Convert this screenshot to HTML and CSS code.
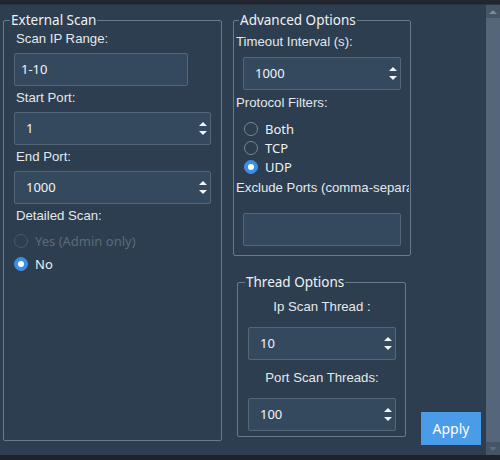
FILE: index.html
```html
<!DOCTYPE html>
<html>
<head>
<meta charset="utf-8">
<link rel="stylesheet" href="styles.css">
</head>
<body>
<div class="window">
  <div class="topbar"></div>
  <div class="main">
    <div class="content">
      <fieldset class="group ext">
        <legend>External Scan</legend>
        <div class="label">Scan IP Range:</div>
        <div class="field lineedit w-ip">1-10</div>
        <div class="label">Start Port:</div>
        <div class="field spin w-port"><span class="val">1</span><span class="arrows"><i class="up"></i><i class="down"></i></span></div>
        <div class="label">End Port:</div>
        <div class="field spin w-port"><span class="val">1000</span><span class="arrows"><i class="up"></i><i class="down"></i></span></div>
        <div class="label">Detailed Scan:</div>
        <div class="radios radios-left">
          <div class="radio disabled"><span class="dot"></span><span class="rtext">Yes (Admin only)</span></div>
          <div class="radio checked"><span class="dot"></span><span class="rtext">No</span></div>
        </div>
      </fieldset>
      <div class="right">
        <fieldset class="group adv">
          <legend>Advanced Options</legend>
          <div class="label">Timeout Interval (s):</div>
          <div class="field spin w-adv"><span class="val">1000</span><span class="arrows"><i class="up"></i><i class="down"></i></span></div>
          <div class="label lbl-proto">Protocol Filters:</div>
          <div class="radios radios-right">
            <div class="radio"><span class="dot"></span><span class="rtext">Both</span></div>
            <div class="radio"><span class="dot"></span><span class="rtext">TCP</span></div>
            <div class="radio checked"><span class="dot"></span><span class="rtext">UDP</span></div>
          </div>
          <div class="label lbl-exclude">Exclude Ports (comma-separated):</div>
          <div class="field lineedit w-adv"></div>
        </fieldset>
        <div class="bottomrow">
          <fieldset class="group thread">
            <legend>Thread Options</legend>
            <div class="label center">Ip Scan Thread :</div>
            <div class="field spin w-thread"><span class="val">10</span><span class="arrows"><i class="up"></i><i class="down"></i></span></div>
            <div class="label center lbl-port">Port Scan Threads:</div>
            <div class="field spin w-thread"><span class="val">100</span><span class="arrows"><i class="up"></i><i class="down"></i></span></div>
          </fieldset>
          <button class="apply">Apply</button>
        </div>
      </div>
    </div>
    <div class="scrollbar">
      <div class="sb-btn"><i class="sb-up"></i></div>
      <div class="sb-handle"></div>
      <div class="sb-btn"><i class="sb-down"></i></div>
    </div>
  </div>
  <div class="bottombar"></div>
</div>
</body>
</html>
```
FILE: styles.css
```css
* { box-sizing: border-box; }
html, body { margin: 0; padding: 0; }
body {
  width: 500px;
  height: 460px;
  overflow: hidden;
  background: #2c3e50;
  font-family: "Liberation Sans", Arial, sans-serif;
  font-size: 13.2px;
  color: #e4e8ec;
}
.window { width: 500px; height: 460px; display: flex; flex-direction: column; }
.topbar { height: 5px; background: #22272f; border-bottom: 1px solid #2a3542; }
.bottombar { height: 5px; background: #1f2328; }
.main { flex: 1; display: flex; min-height: 0; }
.content { flex: 1; display: flex; align-items: flex-start; padding-top: 6px; }

.group {
  margin: 0;
  border: 1px solid #6a7a8a;
  border-radius: 2px;
  min-width: 0;
}
.group legend {
  font-family: "Noto Sans", "Open Sans", sans-serif;
  font-size: 13.5px;
  line-height: 18px;
  color: #f0f2f4;
  padding: 0 1px;
}

.label {
  line-height: 18px;
  height: 16px;
  white-space: nowrap;
}

.field {
  height: 33px;
  border: 1px solid #53667a;
  border-radius: 2px;
  background: #34495e;
  font-family: "Noto Sans", "Open Sans", sans-serif;
  font-size: 13px;
  line-height: 31px;
  color: #f2f4f6;
}
.lineedit { padding-left: 6px; }
.spin { display: flex; align-items: center; justify-content: space-between; padding-left: 11px; padding-right: 3px; }
.arrows { display: flex; flex-direction: column; gap: 5px; }
.arrows i { display: block; width: 0; height: 0; border-left: 4px solid transparent; border-right: 4px solid transparent; }
.arrows .up { border-bottom: 4px solid #f2f4f6; }
.arrows .down { border-top: 4px solid #f2f4f6; }

/* External scan */
.ext { margin-left: 3px; width: 219px; height: 430px; padding: 1px 10px 0 10px; }
.ext legend { margin-left: -4px; }
.ext .label { margin: 0 0 7px 2px; }
.ext .field { margin-bottom: 3px; }
.w-ip { width: 174px; }
.w-port { width: 197px; }

.radios { display: flex; flex-direction: column; }
.radios-left { margin-top: 8px; gap: 4px; }
.radio { display: flex; align-items: center; height: 19px; gap: 7px; font-family: "Noto Sans", "Open Sans", sans-serif; font-size: 13px; color: #eef1f4; }
.dot { width: 14px; height: 14px; border-radius: 50%; border: 1px solid #7a8693; flex: none; position: relative; }
.radio.checked .dot { background: #3d8ee6; border-color: #3d8ee6; }
.radio.checked .dot::after { content: ""; position: absolute; left: 3px; top: 3px; width: 6px; height: 6px; border-radius: 50%; background: #ffffff; }
.radio.disabled .dot { border-color: #4c5a69; }
.radio.disabled .rtext { color: #5c6b7a; }

/* Right column */
.right { display: flex; flex-direction: column; margin-left: 11px; }
.adv { width: 178px; padding: 4px 1px 9px 1px; }
.adv legend { margin-left: 4px; }
.adv .label { margin-left: 1px; }
.adv .field { margin-left: 8px; }
.w-adv { width: 158px; }
.adv .spin { margin-top: 8px; }
.lbl-proto { margin-top: 4px; }
.radios-right { margin-top: 9px; margin-left: 9px; }
.lbl-exclude { margin-top: 3px; width: 173px; height: 19px; margin-bottom: -3px; overflow: hidden; }
.adv .lineedit { margin-top: 18px; }

.bottomrow { display: flex; align-items: flex-end; margin-top: 17px; }
.thread { margin-left: 4px; width: 169px; padding: 7px 9px 5px 10px; margin-bottom: 8px; }
.thread legend { margin-left: -3px; }
.label.center { text-align: center; }
.thread .spin { margin-top: 13px; }
.lbl-port { margin-top: 9px; }
.w-thread { width: 148px; }

.apply {
  margin-left: 15px;
  width: 60px;
  height: 33px;
  border: none;
  border-radius: 0;
  background: #4a9be8;
  color: #ffffff;
  font-family: "Noto Sans", "Open Sans", sans-serif;
  font-size: 14px;
  padding: 0;
}

/* Scrollbar */
.scrollbar { width: 14px; display: flex; flex-direction: column; background: #4a5a6a; }
.sb-btn { height: 13px; background: #455566; display: flex; align-items: center; justify-content: center; }
.sb-handle { flex: 1; background: #56667a; }
.sb-btn i { display: block; width: 0; height: 0; border-left: 4px solid transparent; border-right: 4px solid transparent; }
.sb-up { border-bottom: 4px solid #7d8a98; }
.sb-down { border-top: 4px solid #5f6e7e; }
```
